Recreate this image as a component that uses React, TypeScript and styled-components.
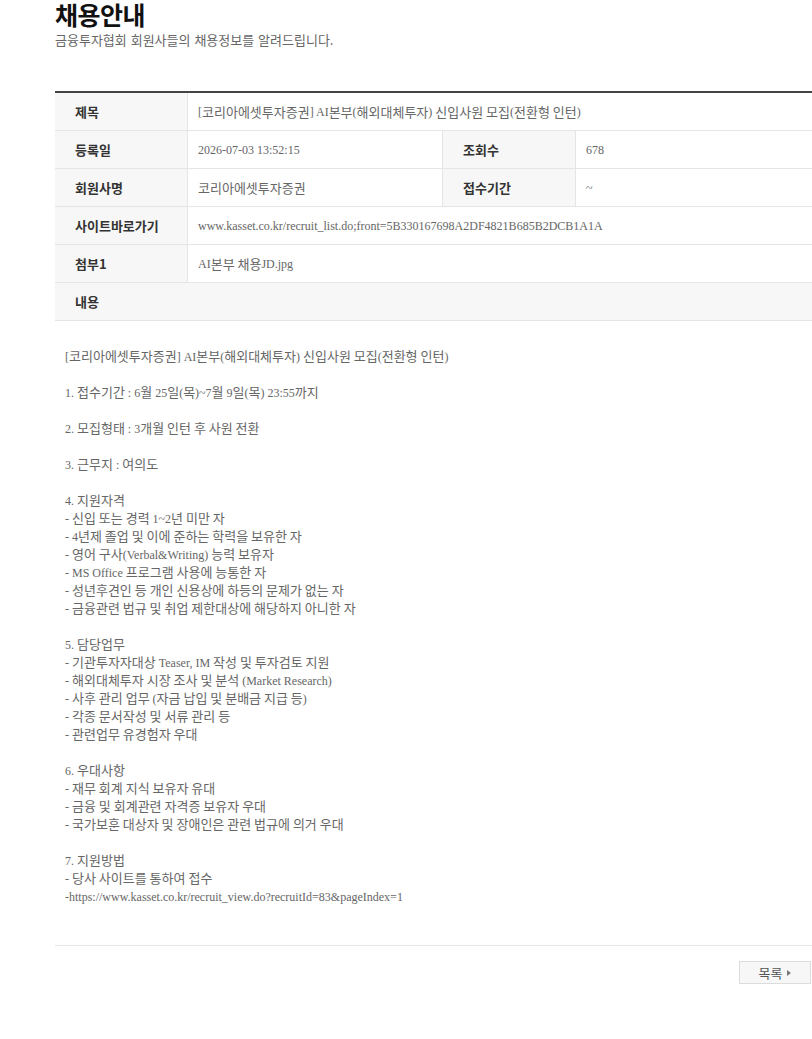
import styled, { createGlobalStyle } from "styled-components";

const GlobalStyle = createGlobalStyle`
  html, body {
    margin: 0;
    padding: 0;
    background: #fff;
    overflow-x: hidden;
  }
  body {
    font-family: "Noto Sans CJK KR", "Noto Sans", sans-serif;
  }
`;

const Page = styled.div`
  padding-left: 55px;
`;

const Title = styled.h1`
  margin: 0;
  font-size: 25px;
  line-height: 28px;
  font-weight: 700;
  color: #111;
  letter-spacing: -0.5px;
`;

const SubTitle = styled.p`
  margin: 4px 0 0;
  font-size: 13px;
  line-height: 15px;
  color: #666;
  word-spacing: 1px;
`;

const Table = styled.div`
  margin-top: 44px;
  border-top: 2px solid #444;
  display: grid;
  grid-template-columns: 133px 255px 133px 1fr;
`;

const Label = styled.div`
  height: 37px;
  display: flex;
  align-items: center;
  padding-left: 20px;
  background: #f7f7f7;
  border-bottom: 1px solid #e5e5e5;
  border-right: 1px solid #e5e5e5;
  font-size: 13px;
  font-weight: 700;
  color: #333;
`;

const SideLabel = styled(Label)`
  border-left: 1px solid #e5e5e5;
  margin-left: -1px;
`;

const Value = styled.div<{ $span?: number }>`
  height: 37px;
  display: flex;
  align-items: center;
  padding-left: 10px;
  border-bottom: 1px solid #e5e5e5;
  grid-column: span ${(p) => p.$span ?? 1};
  font-family: "Noto Sans CJK KR", sans-serif;
  font-size: 13px;
  color: #666;
  white-space: pre;
  overflow: hidden;
`;

const Latin = styled.span`
  font-family: "Liberation Serif", serif;
  font-size: 12px;
  line-height: 0;
`;

const ContentHead = styled.div`
  grid-column: span 4;
  height: 37px;
  display: flex;
  align-items: center;
  padding-left: 20px;
  background: #f7f7f7;
  border-bottom: 1px solid #e5e5e5;
  font-size: 13px;
  font-weight: 700;
  color: #333;
`;

const Body = styled.div`
  padding: 26px 10px 40px;
  border-bottom: 1px solid #e5e5e5;
  font-family: "Noto Sans CJK KR", sans-serif;
  font-size: 13px;
  line-height: 18px;
  color: #666;
  white-space: pre-wrap;
`;

const ButtonRow = styled.div`
  display: flex;
  justify-content: flex-end;
  padding-top: 15px;
  padding-right: 1px;
`;

const ListButton = styled.button`
  width: 72px;
  height: 23px;
  border: 1px solid #dcdcdc;
  background: #f7f7f7;
  display: flex;
  align-items: center;
  justify-content: center;
  gap: 5px;
  font-family: "Noto Sans CJK KR", sans-serif;
  font-size: 13px;
  color: #555;
  padding: 0;
  cursor: pointer;
`;

const Arrow = styled.span`
  width: 0;
  height: 0;
  border-top: 3px solid transparent;
  border-bottom: 3px solid transparent;
  border-left: 4px solid #777;
  margin-top: 1px;
`;

// Latin runs render in the serif face at 12px, Hangul in the CJK face at 13px
function Mixed({ text }: { text: string }) {
  const parts = text.split(/([^\uAC00-\uD7A3\u3131-\u318E\n]+)/);
  return (
    <>
      {parts.map((p, i) =>
        /^[^\uAC00-\uD7A3\u3131-\u318E\n]+$/.test(p) && p.trim() !== "" ? (
          <Latin key={i}>{p}</Latin>
        ) : (
          p
        )
      )}
    </>
  );
}

const content = `[코리아에셋투자증권] AI본부(해외대체투자) 신입사원 모집(전환형 인턴)

1. 접수기간 : 6월 25일(목)~7월 9일(목) 23:55까지

2. 모집형태 : 3개월 인턴 후 사원 전환

3. 근무지 : 여의도

4. 지원자격
- 신입 또는 경력 1~2년 미만 자
- 4년제 졸업 및 이에 준하는 학력을 보유한 자
- 영어 구사(Verbal&Writing) 능력 보유자
- MS Office 프로그램 사용에 능통한 자
- 성년후견인 등 개인 신용상에 하등의 문제가 없는 자
- 금융관련 법규 및 취업 제한대상에 해당하지 아니한 자

5. 담당업무
- 기관투자자대상 Teaser, IM 작성 및 투자검토 지원
- 해외대체투자 시장 조사 및 분석 (Market Research)
- 사후 관리 업무 (자금 납입 및 분배금 지급 등)
- 각종 문서작성 및 서류 관리 등
- 관련업무 유경험자 우대

6. 우대사항
- 재무 회계 지식 보유자 유대
- 금융 및 회계관련 자격증 보유자 우대
- 국가보훈 대상자 및 장애인은 관련 법규에 의거 우대

7. 지원방법
- 당사 사이트를 통하여 접수
-https://www.kasset.co.kr/recruit_view.do?recruitId=83&pageIndex=1`;

export default function App() {
  return (
    <>
      <GlobalStyle />
      <Page>
        <Title>채용안내</Title>
        <SubTitle>금융투자협회 회원사들의 채용정보를 알려드립니다.</SubTitle>

        <Table>
          <Label>제목</Label>
          <Value $span={3}>
            <Mixed text="[코리아에셋투자증권] AI본부(해외대체투자) 신입사원 모집(전환형 인턴)" />
          </Value>

          <Label>등록일</Label>
          <Value>
            <Mixed text="2026-07-03 13:52:15" />
          </Value>
          <SideLabel>조회수</SideLabel>
          <Value>
            <Mixed text="678" />
          </Value>

          <Label>회원사명</Label>
          <Value>코리아에셋투자증권</Value>
          <SideLabel>접수기간</SideLabel>
          <Value>
            <Mixed text="~" />
          </Value>

          <Label>사이트바로가기</Label>
          <Value $span={3}>
            <Mixed text="www.kasset.co.kr/recruit_list.do;front=5B330167698A2DF4821B685B2DCB1A1A" />
          </Value>

          <Label>첨부1</Label>
          <Value $span={3}>
            <Mixed text="AI본부 채용JD.jpg" />
          </Value>

          <ContentHead>내용</ContentHead>
        </Table>

        <Body>
          <Mixed text={content} />
        </Body>

        <ButtonRow>
          <ListButton>
            목록 <Arrow />
          </ListButton>
        </ButtonRow>
      </Page>
    </>
  );
}
